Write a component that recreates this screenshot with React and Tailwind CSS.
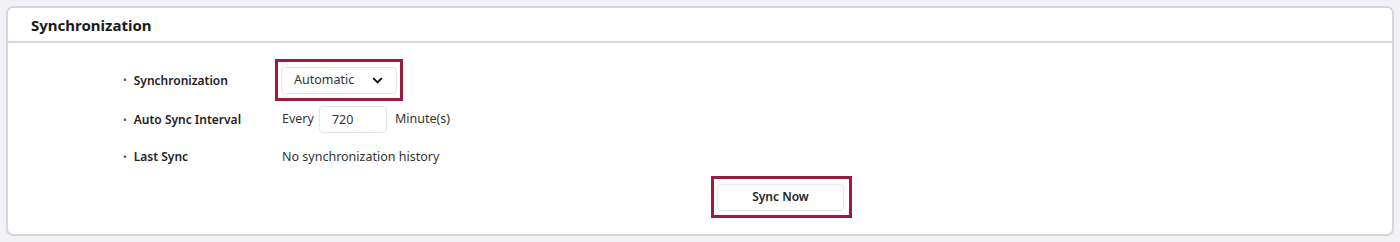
import { ChevronDown } from 'lucide-react';

const font = { fontFamily: '"Noto Sans", "Open Sans", sans-serif' };

function Label({ children }) {
  return (
    <div className="flex items-center w-[155px] shrink-0 pl-[3px] pt-[1px]">
      <span className="text-[10px] text-[#555] mr-[7px]">•</span>
      <span className="text-[12px] font-semibold text-[#222]">{children}</span>
    </div>
  );
}

export default function App() {
  return (
    <div className="bg-[#f2f2f6] w-[1400px] h-[242px] pt-[6px] px-[6px]" style={font}>
      <div className="bg-white border-2 border-[#d6d6da] rounded-[7px] h-[230px] flex flex-col">
        <div className="h-[35px] flex items-center pl-[23px] pt-[1px] border-b-2 border-[#d6d6da]">
          <h2 className="text-[15px] font-bold text-[#1a1a1a]">Synchronization</h2>
        </div>

        <div className="pl-[112px] pt-[16px]">
          <div className="flex items-center h-[42px]">
            <Label>Synchronization</Label>
            <div className="border-[3px] border-[#9b1c3c] px-[3px] pt-[5px] pb-[4px] w-[128px]">
              <button className="w-[116px] h-[27px] flex items-center justify-between pl-[12px] pr-[11px] border border-[#e6e6e6] rounded-[4px] bg-white text-[12.5px] text-[#333]">
                Automatic
                <ChevronDown size={15} strokeWidth={3.2} className="text-[#111]" />
              </button>
            </div>
          </div>

          <div className="flex items-center h-[27px] mt-[5px]">
            <Label>Auto Sync Interval</Label>
            <div className="flex items-center ml-[7px] text-[12.5px] text-[#333]">
              <span>Every</span>
              <input
                defaultValue="720"
                className="ml-[5px] w-[68px] h-[27px] border border-[#e6e6e6] rounded-[4px] pl-[12px] text-[12.5px] text-[#333] outline-none"
              />
              <span className="ml-[8px]">Minute(s)</span>
            </div>
          </div>

          <div className="flex items-center h-[27px] mt-[10px]">
            <Label>Last Sync</Label>
            <span className="ml-[7px] mt-[1px] text-[12.5px] text-[#333]">No synchronization history</span>
          </div>

          <div className="flex mt-[6px] pl-[591px]">
            <div className="border-[3px] border-[#9b1c3c] pl-[3px] pr-[5px] py-[4px]">
              <button className="w-[127px] h-[27px] border border-[#e6e6e6] rounded-[4px] bg-white text-[12px] font-semibold text-[#222]">
                Sync Now
              </button>
            </div>
          </div>
        </div>
      </div>
    </div>
  );
}
